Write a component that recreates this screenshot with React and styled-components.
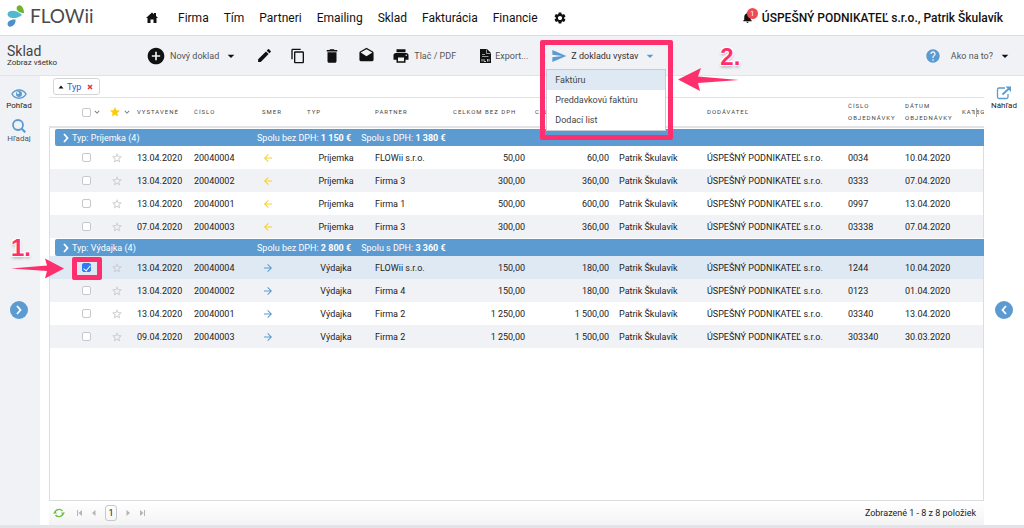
import React from "react";
import styled, { createGlobalStyle } from "styled-components";
import {
  MdAddCircle,
  MdArrowBack,
  MdArrowDropDown,
  MdArrowForward,
  MdContentCopy,
  MdDelete,
  MdDrafts,
  MdEdit,
  MdHelp,
  MdKeyboardArrowDown,
  MdNotifications,
  MdPrint,
  MdSend,
  MdSettings,
  MdStar,
  MdStarBorder,
} from "react-icons/md";

const NAV = ["Firma", "Tím", "Partneri", "Emailing", "Sklad", "Fakturácia", "Financie"];
const MENU = ["Faktúru", "Preddavkovú faktúru", "Dodací list"];
const COLUMNS = [55, 28, 57, 68, 45, 68, 78, 82, 84, 88, 141, 57, 57, 27];
const SUPPLIER = "ÚSPEŠNÝ PODNIKATEĽ s.r.o.";

const GROUPS = [
  {
    type: "Príjemka",
    net: "1 150 €",
    gross: "1 380 €",
    rows: [
      ["13.04.2020", "20040004", "FLOWii s.r.o.", "50,00", "60,00", "0034", "10.04.2020"],
      ["13.04.2020", "20040002", "Firma 3", "300,00", "360,00", "0333", "07.04.2020"],
      ["13.04.2020", "20040001", "Firma 1", "500,00", "600,00", "0997", "13.04.2020"],
      ["07.04.2020", "20040003", "Firma 3", "300,00", "360,00", "03338", "07.04.2020"],
    ],
  },
  {
    type: "Výdajka",
    net: "2 800 €",
    gross: "3 360 €",
    rows: [
      ["13.04.2020", "20040004", "FLOWii s.r.o.", "150,00", "180,00", "1244", "10.04.2020"],
      ["13.04.2020", "20040002", "Firma 4", "150,00", "180,00", "0123", "01.04.2020"],
      ["13.04.2020", "20040001", "Firma 2", "1 250,00", "1 500,00", "03340", "13.04.2020"],
      ["09.04.2020", "20040003", "Firma 2", "1 250,00", "1 500,00", "303340", "30.03.2020"],
    ],
  },
];

const Logo = () => (
  <LogoLink href="#" aria-label="FLOWii">
    <svg width="17" height="22" viewBox="0 0 17 22">
      <path d="M17 8C11 8 8 4 10.500 1C13.500 -1.500 17 2.500 17 8Z" fill="#6cb52d" />
      <path d="M15 10C10 4.500 1 4.500 0.500 9C0.500 14 10 14.500 15 10Z" fill="#4fb9cf" />
      <path d="M8.500 14.500C9 19.500 5 22.500 2 21.500C-1.500 19 1.500 14 8.500 14.500Z" fill="#4e8fca" />
    </svg>
    <LogoText>FLOWii</LogoText>
  </LogoLink>
);

const Chevron = ({ left }) => (
  <svg width="6" height="10" viewBox="0 0 6 10" fill="none" stroke="currentColor" strokeWidth="1.800">
    <path d={left ? "M5 1L1.500 5L5 9" : "M1 1L4.500 5L1 9"} />
  </svg>
);

const DocumentRow = ({ row, type, striped, selected, onToggle }) => {
  const [issued, number, partner, net, gross, order, orderDate] = row;
  const incoming = type === "Príjemka";

  return (
    <Row $striped={striped} $selected={selected}>
      <Cell $indent>
        <Check type="checkbox" aria-label={number} checked={selected} onChange={onToggle} />
      </Cell>
      <Cell>
        <StarButton aria-label="Obľúbené">
          <MdStarBorder size={12} />
        </StarButton>
      </Cell>
      <Cell>{issued}</Cell>
      <Cell>{number}</Cell>
      <Cell>
        <Direction $incoming={incoming}>
          {incoming ? <MdArrowBack size={12} /> : <MdArrowForward size={12} />}
        </Direction>
      </Cell>
      <Cell $align="center">{type}</Cell>
      <Cell>{partner}</Cell>
      <Cell $align="right">{net}</Cell>
      <Cell $align="right">{gross}</Cell>
      <Cell>Patrik Škulavík</Cell>
      <Cell>{SUPPLIER}</Cell>
      <Cell>{order}</Cell>
      <Cell>{orderDate}</Cell>
      <Cell />
    </Row>
  );
};

const App = () => {
  const [checked, setChecked] = React.useState({ "Výdajka20040004": true });

  const toggle = (key) => setChecked({ ...checked, [key]: !checked[key] });

  return (
    <Page>
      <GlobalStyle />
      <Header>
        <Logo />
        <Nav>
          <HomeLink href="#" aria-label="Domov">
            <svg width="12" height="11" viewBox="0 0 12 11" fill="#111">
              <path d="M6 0.500L8 2.300V1H10V4.100L12 6H10.500V11H7.500V7.500H4.500V11H1.500V6H0Z" />
            </svg>
          </HomeLink>
          {NAV.map((item) => (
            <NavLink href="#" key={item}>
              {item}
            </NavLink>
          ))}
          <NavLink href="#" aria-label="Nastavenia">
            <MdSettings size={14} />
          </NavLink>
        </Nav>
        <Account href="#">
          <Bell>
            <MdNotifications size={13} />
            <Badge>1</Badge>
          </Bell>
          ÚSPEŠNÝ PODNIKATEĽ s.r.o., Patrik Škulavík
        </Account>
      </Header>

      <Toolbar>
        <Heading>
          <Title>Sklad</Title>
          <Subtitle>Zobraz všetko</Subtitle>
        </Heading>
        <Tools>
          <Tool>
            <MdAddCircle size={20} />
            Nový doklad
            <MdArrowDropDown size={16} />
          </Tool>
          <Tool aria-label="Upraviť">
            <MdEdit size={17} />
          </Tool>
          <Tool aria-label="Kopírovať">
            <MdContentCopy size={16} />
          </Tool>
          <Tool aria-label="Zmazať">
            <MdDelete size={18} />
          </Tool>
          <Tool aria-label="Odoslať">
            <MdDrafts size={17} />
          </Tool>
          <Tool>
            <MdPrint size={18} />
            Tlač / PDF
          </Tool>
          <Tool $spaced>
            <svg width="12" height="14" viewBox="0 0 12 14">
              <path d="M1 0H8L12 4V14H1Z" fill="#111" />
              <path d="M7.500 0.500V4.500H11.500M3 5.500H6M3 7.500H9.500" stroke="#f1f2f6" strokeWidth="0.600" fill="none" />
              <path d="M3 10V12.500M5 10V12.500H7M8.500 10V12.500M10 10V12.500" stroke="#f1f2f6" strokeWidth="0.800" fill="none" />
            </svg>
            Export...
          </Tool>
          <IssueBox>
            <Tool $dark aria-expanded="true">
              <MdSend size={16} />
              Z dokladu vystav
              <MdArrowDropDown size={16} />
            </Tool>
            <Menu>
              {MENU.map((item, i) => (
                <MenuItem key={item} $active={i === 0}>
                  {item}
                </MenuItem>
              ))}
            </Menu>
            <Frame />
            <MenuPointer>
              <StepNumber>2.</StepNumber>
              <svg width="62" height="25" viewBox="0 0 62 25">
                <path d="M0 12.500L23 1L20 9.500L61 13L20 16L22 24Z" fill="#ff2f6d" />
              </svg>
            </MenuPointer>
          </IssueBox>
        </Tools>
        <Tool>
          <HelpIcon size={16} />
          Ako na to?
          <MdArrowDropDown size={16} />
        </Tool>
      </Toolbar>

      <Body>
        <Side>
          <SideButton $bold>
            <svg width="16" height="12" viewBox="0 0 16 12">
              <path d="M1 6C4 0.500 12 0.500 15 6C12 11.500 4 11.500 1 6Z" fill="none" stroke="#5b9bd1" strokeWidth="1.500" />
              <circle cx="8" cy="6" r="3" fill="#5b9bd1" />
              <circle cx="7" cy="5" r="1" fill="#fff" />
            </svg>
            Pohľad
          </SideButton>
          <SideButton>
            <svg width="14" height="14" viewBox="0 0 14 14" fill="none" stroke="#5b9bd1">
              <circle cx="6" cy="6" r="5" strokeWidth="1.800" />
              <path d="M9.500 9.500L13.300 13.300" strokeWidth="2.200" />
            </svg>
            Hľadaj
          </SideButton>
          <RoundButton aria-label="Rozbaliť">
            <Chevron />
          </RoundButton>
        </Side>

        <Main>
          <GroupBar>
            <Chip>
              <svg width="6" height="4" viewBox="0 0 6 4">
                <path d="M0.500 3.500L3 0.500L5.500 3.500Z" fill="#111" />
              </svg>
              Typ
              <ChipRemove aria-label="Odstrániť">
                <svg width="6" height="6" viewBox="0 0 6 6">
                  <path d="M1 1L5 5M5 1L1 5" stroke="#e2373f" strokeWidth="1.600" />
                </svg>
              </ChipRemove>
            </Chip>
          </GroupBar>

          <Table>
            <colgroup>
              {COLUMNS.map((width, i) => (
                <Col key={i} $width={width} />
              ))}
            </colgroup>
            <thead>
              <tr>
                <HeadCell $indent>
                  <HeadTools>
                    <Check type="checkbox" aria-label="Označiť všetko" />
                    <MdKeyboardArrowDown size={10} />
                  </HeadTools>
                </HeadCell>
                <HeadCell>
                  <HeadTools>
                    <MdStar size={12} color="#ffcb05" />
                    <MdKeyboardArrowDown size={10} />
                  </HeadTools>
                </HeadCell>
                <HeadCell>Vystavené</HeadCell>
                <HeadCell>Číslo</HeadCell>
                <HeadCell>Smer</HeadCell>
                <HeadCell>Typ</HeadCell>
                <HeadCell>Partner</HeadCell>
                <HeadCell>Celkom bez DPH</HeadCell>
                <HeadCell>Celkom s DPH</HeadCell>
                <HeadCell />
                <HeadCell>Dodávateľ</HeadCell>
                <HeadCell $wrap>Číslo objednávky</HeadCell>
                <HeadCell $wrap>Dátum objednávky</HeadCell>
                <HeadCell>
                  Kateg
                  <ColumnGrip>
                    <svg width="5" height="9" viewBox="0 0 5 9" fill="none" stroke="#aaa">
                      <path d="M2.500 0V9M0.500 2.500V6.500M4.500 2.500V6.500" />
                    </svg>
                  </ColumnGrip>
                </HeadCell>
              </tr>
            </thead>
            <tbody>
              {GROUPS.map((group) => (
                <React.Fragment key={group.type}>
                  <tr>
                    <GroupCell colSpan={14}>
                      <GroupLine>
                        <GroupName>
                          <Chevron />
                          Typ: {group.type} ({group.rows.length})
                        </GroupName>
                        <span>
                          Spolu bez DPH: <b>{group.net}</b>
                        </span>
                        <span>
                          Spolu s DPH: <b>{group.gross}</b>
                        </span>
                      </GroupLine>
                    </GroupCell>
                  </tr>
                  {group.rows.map((row, i) => {
                    const key = group.type + row[1];
                    return (
                      <DocumentRow
                        key={key}
                        row={row}
                        type={group.type}
                        striped={i % 2 === 1}
                        selected={!!checked[key]}
                        onToggle={() => toggle(key)}
                      />
                    );
                  })}
                </React.Fragment>
              ))}
            </tbody>
          </Table>
          <TableRest />

          <Pager>
            <Refresh aria-label="Obnoviť">
              <svg width="12" height="10" viewBox="0 0 12 10" fill="none" stroke="#6cbf45" strokeWidth="1.400">
                <path d="M2 5C2 1.500 7 0 9.500 3M10 5C10 8.500 5 10 2.500 7" />
                <path d="M0 5.500L2 3L4 5.500ZM8 4.500L10 7L12 4.500Z" fill="#6cbf45" stroke="none" />
              </svg>
            </Refresh>
            <PagerButton aria-label="Prvá strana">
              <svg width="6" height="6" viewBox="0 0 6 6" fill="#b5b5b5">
                <path d="M0 0H1V6H0ZM5 0V6L1.500 3Z" />
              </svg>
            </PagerButton>
            <PagerButton aria-label="Predošlá strana">
              <svg width="6" height="6" viewBox="0 0 6 6" fill="#b5b5b5">
                <path d="M4.500 0V6L1 3Z" />
              </svg>
            </PagerButton>
            <PageNumber>1</PageNumber>
            <PagerButton aria-label="Ďalšia strana">
              <svg width="6" height="6" viewBox="0 0 6 6" fill="#b5b5b5">
                <path d="M1.500 0V6L5 3Z" />
              </svg>
            </PagerButton>
            <PagerButton aria-label="Posledná strana">
              <svg width="6" height="6" viewBox="0 0 6 6" fill="#b5b5b5">
                <path d="M5 0H6V6H5ZM1 0V6L4.500 3Z" />
              </svg>
            </PagerButton>
            <PagerInfo>Zobrazené 1 - 8 z 8 položiek</PagerInfo>
          </Pager>
          <CheckFrame />
          <CheckPointer>
            <StepNumber>1.</StepNumber>
            <svg width="54" height="21" viewBox="0 0 54 21">
              <path d="M53 10.500L34 0.500L36 7.500L0 10.500L36 13L34 20.500Z" fill="#ff2f6d" />
            </svg>
          </CheckPointer>
        </Main>

        <Side $right>
          <SideButton $bold>
            <svg width="16" height="14" viewBox="0 0 16 14" fill="none" stroke="#5b9bd1">
              <path d="M9 2H3C2 2 1.500 2.500 1.500 3.500V11C1.500 12 2 12.500 3 12.500H10.500C11.500 12.500 12 12 12 11V8" strokeWidth="1.300" />
              <path d="M6.500 8.500L13 2.500" strokeWidth="1.800" />
              <path d="M9.500 0.500H15V6Z" fill="#5b9bd1" stroke="none" />
            </svg>
            Náhľad
          </SideButton>
          <RoundButton aria-label="Zbaliť">
            <Chevron left />
          </RoundButton>
        </Side>
      </Body>
    </Page>
  );
};

const GlobalStyle = createGlobalStyle`
  * {
    box-sizing: border-box;
  }
  body {
    margin: 0;
    background: #fff;
    color: #222;
    font-family: Roboto, "Liberation Sans", sans-serif;
    font-size: 9px;
  }
  button {
    padding: 0;
    border: 0;
    background: none;
    color: inherit;
    font: inherit;
    cursor: pointer;
  }
  a {
    color: inherit;
    text-decoration: none;
  }
  svg {
    display: block;
    flex: none;
  }
`;

const Page = styled.div`
  display: flex;
  flex-direction: column;
  min-height: 100vh;
  border-bottom: 3px solid #e3e3ea;
`;

const Header = styled.header`
  display: flex;
  align-items: center;
  height: 36px;
  padding: 0 21px 0 7px;
  border-bottom: 1px solid #dcdde2;
`;

const LogoLink = styled.a`
  display: flex;
  align-items: center;
  gap: 6px;
  width: 138px;
  padding-bottom: 4px;
`;

const LogoText = styled.span`
  color: #4a4a4d;
  font-family: Lato, sans-serif;
  font-size: 19px;
  line-height: 20px;
`;

const Nav = styled.nav`
  display: flex;
  align-items: center;
  gap: 15px;
  color: #111;
  font-size: 12px;
`;

const NavLink = styled.a`
  display: block;
`;

const HomeLink = styled(NavLink)`
  padding: 0 5px 0 1px;
`;

const Account = styled.a`
  display: flex;
  align-items: center;
  gap: 4px;
  margin-left: auto;
  color: #111;
  font-size: 12px;
  font-weight: 500;
  white-space: nowrap;
`;

const Bell = styled.span`
  position: relative;
  width: 17px;
`;

const Badge = styled.span`
  position: absolute;
  top: -3px;
  right: 0;
  width: 11px;
  height: 11px;
  border-radius: 50%;
  background: #ee4b55;
  color: #fff;
  font-size: 8px;
  font-weight: 400;
  line-height: 11px;
  text-align: center;
`;

const Toolbar = styled.div`
  display: flex;
  align-items: center;
  height: 40px;
  padding: 0 11px 0 7px;
  border-bottom: 1px solid #e3e3e7;
  background: #f1f2f6;
`;

const Heading = styled.div`
  width: 139px;
`;

const Title = styled.h1`
  margin: 0;
  color: #444;
  font-size: 14px;
  font-weight: 400;
  line-height: 14px;
`;

const Subtitle = styled.div`
  color: #333;
  font-size: 8px;
  line-height: 9px;
`;

const Tools = styled.div`
  display: flex;
  flex: 1;
  align-items: center;
  gap: 17px;
`;

const Tool = styled.button`
  display: flex;
  align-items: center;
  gap: 4px;
  margin-left: ${({ $spaced }) => ($spaced ? 6 : 0)}px;
  color: ${({ $dark }) => ($dark ? "#333" : "#555")};
  white-space: nowrap;

  svg {
    color: ${({ $dark }) => ($dark ? "#5b9bd1" : "#111")};
  }
`;

const HelpIcon = styled(MdHelp)`
  && {
    margin-right: 6px;
    color: #5b9bd1;
  }
`;

const IssueBox = styled.div`
  position: relative;
  margin-left: 6px;
`;

const Menu = styled.div`
  position: absolute;
  z-index: 1;
  top: 21px;
  left: -5px;
  width: 120px;
  border: 1px solid #c9ccd2;
  background: #fff;
`;

const MenuItem = styled.button`
  display: block;
  width: 100%;
  height: 20px;
  padding: 0 8px;
  background: ${({ $active }) => ($active ? "#dfe9f4" : "#fff")};
  color: #444;
  text-align: left;
`;

const Frame = styled.div`
  position: absolute;
  z-index: 2;
  top: -8px;
  left: -11px;
  width: 133px;
  height: 100px;
  border: 5px solid #ff2f6d;
  border-radius: 2px;
  pointer-events: none;
`;

const MenuPointer = styled.div`
  position: absolute;
  z-index: 2;
  top: -1px;
  left: 127px;
  display: flex;
  flex-direction: column;
  pointer-events: none;

  span {
    align-self: flex-end;
  }
`;

const StepNumber = styled.span`
  color: #ff2f6d;
  font-family: "Liberation Sans", sans-serif;
  font-size: 24px;
  font-weight: 700;
  line-height: 20px;
  text-shadow: 1px 1px 1px #fff, -1px -1px 1px #fff, 1px -1px 1px #fff,
    -1px 1px 1px #fff, 0 2px 3px #999;
`;

const Body = styled.div`
  display: flex;
  flex: 1;
`;

const Side = styled.aside`
  position: relative;
  display: flex;
  flex-direction: column;
  align-items: center;
  gap: 9px;
  width: 40px;
  padding: ${({ $right }) => ($right ? "10px 0 0" : "12px 2px 0 0")};
  background: ${({ $right }) => ($right ? "#fff" : "#f1f2f6")};
`;

const SideButton = styled.button`
  display: flex;
  flex-direction: column;
  align-items: center;
  gap: 1px;
  color: ${({ $bold }) => ($bold ? "#222" : "#555")};
  font-size: 8px;
  line-height: 9px;
`;

const RoundButton = styled.button`
  position: absolute;
  top: 50%;
  display: flex;
  align-items: center;
  justify-content: center;
  width: 18px;
  height: 18px;
  border-radius: 50%;
  background: #5b9bd1;
  color: #fff;
`;

const Main = styled.main`
  position: relative;
  display: flex;
  flex: 1;
  flex-direction: column;
  min-width: 0;
  padding-left: 9px;
`;

const GroupBar = styled.div`
  display: flex;
  padding: 2px 4px;
  border-bottom: 1px solid #e2e2e2;
`;

const Chip = styled.div`
  display: flex;
  align-items: center;
  gap: 3px;
  height: 17px;
  padding: 0 6px 0 4px;
  border: 1px solid #d5d5d8;
  border-radius: 3px;
  color: #1a62e0;
`;

const ChipRemove = styled.button`
  margin-left: 3px;
`;

const Table = styled.table`
  width: 100%;
  border-collapse: separate;
  border-spacing: 0;
  table-layout: fixed;
`;

const Col = styled.col`
  width: ${({ $width }) => $width}px;
`;

const HeadCell = styled.th`
  position: relative;
  height: 30px;
  padding: 0 0 0 ${({ $indent }) => ($indent ? 33 : 5)}px;
  border-bottom: 2px solid #e2e3e6;
  color: #444;
  font-size: 6px;
  font-weight: 400;
  letter-spacing: 1px;
  line-height: 12px;
  text-align: left;
  text-transform: uppercase;
  white-space: ${({ $wrap }) => ($wrap ? "normal" : "nowrap")};
`;

const HeadTools = styled.div`
  display: flex;
  align-items: center;
  gap: 1px;
  color: #777;
`;

const ColumnGrip = styled.span`
  position: absolute;
  top: 10px;
  right: 5px;
`;

const Cell = styled.td`
  height: 23px;
  padding: 0 5px 0 ${({ $indent }) => ($indent ? 32 : 5)}px;
  text-align: ${({ $align }) => $align || "left"};
  white-space: nowrap;

  &:first-child {
    border-left: 1px solid #dcdde0;
  }
  &:last-child {
    border-right: 1px solid #dcdde0;
  }
`;

const rowColor = ({ $selected, $striped }) => {
  if ($selected) return "#dfe9f4";
  return $striped ? "#f1f2f6" : "#fff";
};

const Row = styled.tr`
  background: ${rowColor};
`;

const GroupCell = styled.td`
  height: 18px;
  padding: 1px 0 0 5px;
  border-left: 1px solid #dcdde0;
`;

const GroupLine = styled.div`
  display: flex;
  align-items: center;
  gap: 10px;
  height: 17px;
  padding-left: 8px;
  border-radius: 2px 0 0 2px;
  background: #5b9bd1;
  color: #fff;
`;

const GroupName = styled.span`
  display: flex;
  align-items: center;
  gap: 3px;
  width: 184px;
`;

const Check = styled.input`
  display: flex;
  flex: none;
  justify-content: center;
  width: 9px;
  height: 9px;
  margin: 0;
  appearance: none;
  border: 1px solid #c8c8cc;
  border-radius: 2px;
  background: #fff;

  &:checked {
    border-color: #2f7bf0;
    background: #2f7bf0;
  }
  &:checked::after {
    content: "";
    width: 3px;
    height: 6px;
    border: solid #fff;
    border-width: 0 1px 1px 0;
    transform: rotate(40deg);
  }
`;

const StarButton = styled.button`
  display: block;
  margin-left: 2px;
  color: #c9c9cd;
`;

const Direction = styled.span`
  display: block;
  padding-top: 1px;
  color: ${({ $incoming }) => ($incoming ? "#f9d21c" : "#5b9bd1")};
`;

const TableRest = styled.div`
  flex: 1;
  border: 1px solid #dcdde0;
  border-top: 0;
`;

const Pager = styled.footer`
  display: flex;
  align-items: center;
  gap: 8px;
  height: 24px;
  padding: 0 8px 0 4px;
  background: linear-gradient(#fff, #f3f3f3);
`;

const PagerButton = styled.button`
  min-width: 6px;
`;

const Refresh = styled.button`
  margin-right: 4px;
`;

const PageNumber = styled.button`
  width: 12px;
  height: 16px;
  border: 1px solid #c8c8cc;
  border-radius: 3px;
`;

const PagerInfo = styled.span`
  margin-left: auto;
`;

const CheckFrame = styled.div`
  position: absolute;
  top: 181px;
  left: 32px;
  width: 30px;
  height: 23px;
  border: 5px solid #ff2f6d;
  border-radius: 2px;
  pointer-events: none;
`;

const CheckPointer = styled.div`
  position: absolute;
  top: 162px;
  left: -29px;
  display: flex;
  flex-direction: column;
  pointer-events: none;
`;

export default App;
